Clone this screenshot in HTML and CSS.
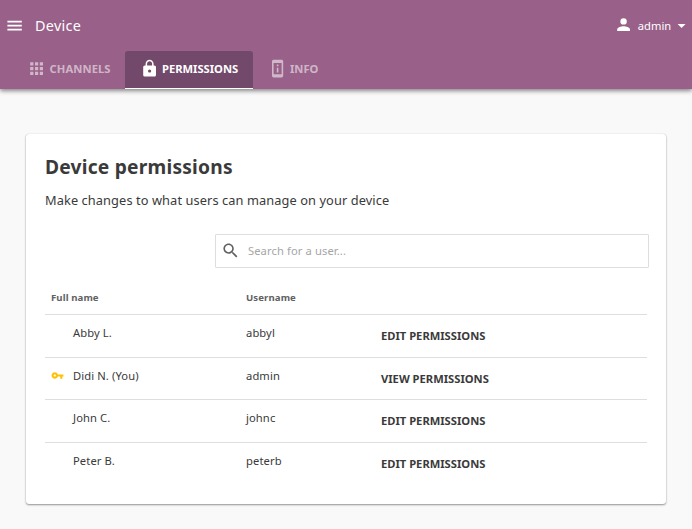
FILE: index.html
```html
<!DOCTYPE html>
<html lang="en">
<head>
<meta charset="utf-8">
<title>Device permissions</title>
<link rel="stylesheet" href="styles.css">
</head>
<body>
<header class="appbar">
  <div class="toolbar">
    <svg class="icon" viewBox="0 0 24 24"><path d="M3 18h18v-2H3v2zm0-5h18v-2H3v2zm0-7v2h18V6H3z"/></svg>
    <span class="title">Device</span>
    <div class="account">
      <svg class="icon" viewBox="0 0 24 24"><circle cx="12" cy="8" r="4"/><path d="M12 14c-2.670 0-8 1.340-8 4v2h16v-2c0-2.660-5.330-4-8-4z"/></svg>
      <span class="account-name">admin</span>
      <svg class="icon caret" viewBox="0 0 24 24"><path d="M7 10l5 5 5-5z"/></svg>
    </div>
  </div>
  <nav class="tabs">
    <a class="tab"><svg class="icon" viewBox="0 0 24 24"><path d="M4 8h4V4H4v4zm6 12h4v-4h-4v4zm-6 0h4v-4H4v4zm0-6h4v-4H4v4zm6 0h4v-4h-4v4zm6-10v4h4V4h-4zm-6 4h4V4h-4v4zm6 6h4v-4h-4v4zm0 6h4v-4h-4v4z"/></svg><span>CHANNELS</span></a>
    <a class="tab active"><svg class="icon" viewBox="0 0 24 24"><path d="M18 8h-1V6c0-2.760-2.240-5-5-5S7 3.240 7 6v2H6c-1.100 0-2 .9-2 2v10c0 1.100.9 2 2 2h12c1.100 0 2-.9 2-2V10c0-1.100-.9-2-2-2zm-6 9c-1.100 0-2-.9-2-2s.9-2 2-2 2 .9 2 2-.9 2-2 2zm3.100-9H8.900V6c0-1.710 1.390-3.100 3.100-3.100s3.100 1.390 3.100 3.100v2z"/></svg><span>PERMISSIONS</span></a>
    <a class="tab"><svg class="icon" viewBox="0 0 24 24"><path d="M11 7h2v2h-2zm0 4h2v6h-2zm6-9.990L7 1c-1.100 0-2 .9-2 2v18c0 1.100.9 2 2 2h10c1.100 0 2-.9 2-2V3c0-1.100-.9-1.990-2-1.990zM17 19H7V5h10v14z"/></svg><span>INFO</span></a>
  </nav>
</header>
<main class="card">
  <h1>Device permissions</h1>
  <p>Make changes to what users can manage on your device</p>
  <div class="search">
    <svg class="icon" viewBox="0 0 24 24"><path d="M15.500 14h-.79l-.28-.27C15.410 12.590 16 11.110 16 9.500 16 5.910 13.090 3 9.500 3S3 5.910 3 9.500 5.910 16 9.500 16c1.610 0 3.090-.59 4.230-1.570l.27.28v.79l5 4.990L20.490 19l-4.990-5zm-6 0C7.010 14 5 11.990 5 9.500S7.010 5 9.500 5 14 7.010 14 9.500 11.990 14 9.500 14z"/></svg>
    <span>Search for a user...</span>
  </div>
  <div class="table">
    <div class="row head"><span>Full name</span><span>Username</span></div>
    <div class="row"><span class="name">Abby L.</span><span>abbyl</span><b>EDIT PERMISSIONS</b></div>
    <div class="row"><span class="name"><svg class="key" viewBox="0 0 24 24"><path d="M12.650 10C11.830 7.670 9.610 6 7 6c-3.310 0-6 2.690-6 6s2.690 6 6 6c2.610 0 4.830-1.670 5.650-4H17v4h4v-4h2v-4H12.650zM7 14c-1.100 0-2-.9-2-2s.9-2 2-2 2 .9 2 2-.9 2-2 2z"/></svg>Didi N. (You)</span><span>admin</span><b>VIEW PERMISSIONS</b></div>
    <div class="row"><span class="name">John C.</span><span>johnc</span><b>EDIT PERMISSIONS</b></div>
    <div class="row"><span class="name">Peter B.</span><span>peterb</span><b>EDIT PERMISSIONS</b></div>
  </div>
</main>
</body>
</html>
```
FILE: styles.css
```css
* { box-sizing: border-box; }
body {
  margin: 0;
  height: 529px;
  overflow: hidden;
  background: #f9f9f9;
  color: #3a3a3a;
  font: 11.2px/16px "Noto Sans", sans-serif;
}
.icon { width: 19.2px; height: 19.2px; fill: currentColor; flex: none; }
.appbar {
  height: 89px;
  background: #996189;
  color: #fff;
  box-shadow: 0 2px 4px rgba(0,0,0,.35), 0 1px 6px rgba(0,0,0,.18);
}
.toolbar { display: flex; align-items: center; height: 51px; padding-left: 4.8px; }
.title { margin: 0 0 0 11px; font-size: 14.4px; letter-spacing: .3px; }
.account { display: flex; align-items: center; margin: 0 .5px 0 auto; }
.account-name { width: 34.5px; margin: 0 0 0 5px; }
.account .icon { margin-top: -2px; }
.account .caret { margin-top: 1px; }
.tabs { display: flex; height: 38px; padding-left: 11px; }
.tab {
  display: flex;
  align-items: center;
  gap: 3px;
  width: 128px;
  padding: 0 0 2px 14.8px;
  border-bottom: 1px solid transparent;
  color: rgba(255,255,255,.55);
  font-weight: 700;
}
.tab:first-child { width: 114px; padding-left: 16.4px; letter-spacing: .08px; }
.tab.active {
  background: #72486b;
  color: #fff;
  border-bottom-color: #fff;
  border-radius: 3px 3px 0 0;
}
.card {
  width: 640px;
  height: 370px;
  margin: 45px 0 0 26px;
  padding: 19px 19px 0;
  background: #fff;
  border-radius: 3px;
  box-shadow: 0 1px 2px rgba(0,0,0,.4), 0 0 1px rgba(0,0,0,.2);
}
h1 { margin: 0; font-size: 19.2px; line-height: 28px; letter-spacing: .22px; }
p { margin: 10px 0 0; font-size: 12.8px; line-height: 18px; letter-spacing: .09px; }
.search {
  display: flex;
  align-items: center;
  gap: 7px;
  width: 434px;
  height: 34px;
  margin: 25px 0 0 170px;
  padding-left: 5.4px;
  border: 1px solid #dedede;
  border-radius: 1px;
  color: #a6a6a6;
}
.search .icon { margin-right: .4px; color: #616161; }
.search span { letter-spacing: .1px; }
.table { width: 602px; margin-top: 20px; }
.row {
  display: grid;
  grid-template-columns: 195px 135px 1fr;
  height: 42.67px;
  padding: 10px 6px 0;
  border-top: 1px solid #dedede;
}
.row span { letter-spacing: .1px; }
.row b { padding-top: 3px; }
.row.head {
  height: 26px;
  padding-top: 2px;
  border: 0;
  color: #616161;
  font-size: 9.6px;
  font-weight: 700;
}
.name { position: relative; padding-left: 22px; }
.key { position: absolute; left: 0; top: .9px; width: 13px; height: 13px; fill: #ffc107; }
```
